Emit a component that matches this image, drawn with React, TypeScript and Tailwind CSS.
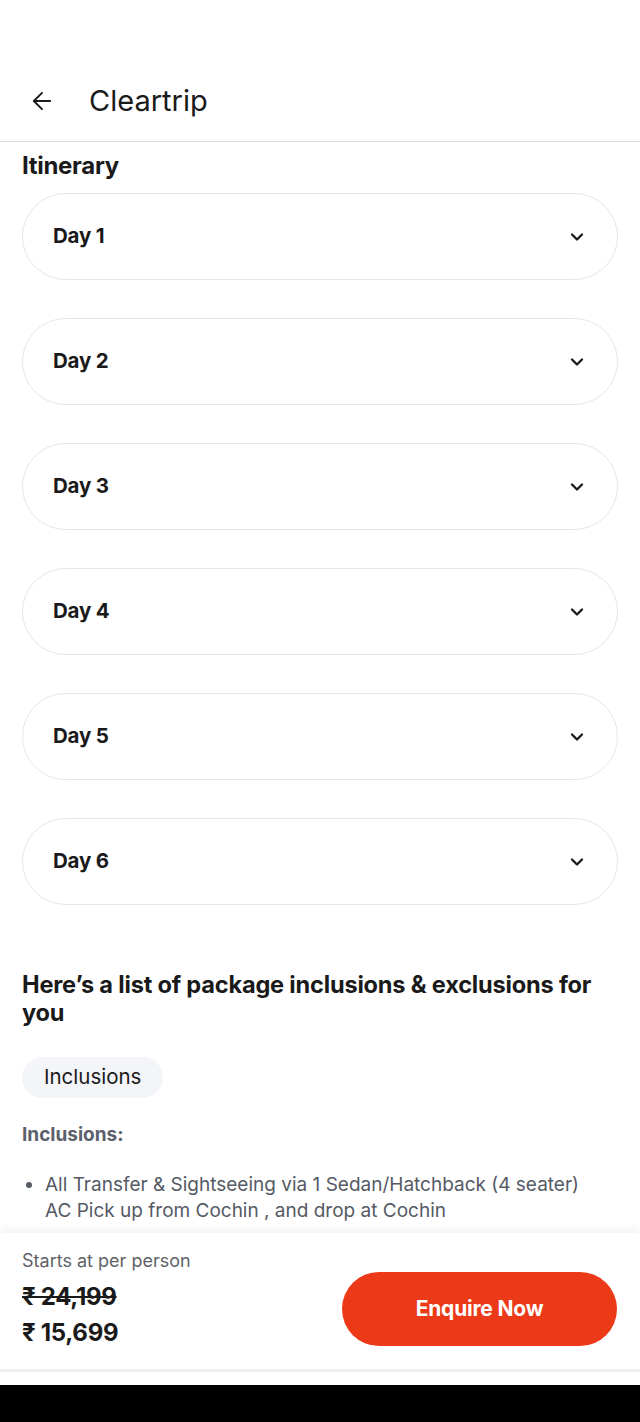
import React from 'react';
import { ArrowLeft, ChevronDown } from 'lucide-react';

const days = ['Day 1', 'Day 2', 'Day 3', 'Day 4', 'Day 5', 'Day 6'];

const App: React.FC = () => {
  return (
    <div
      className="flex h-[1422px] w-[640px] flex-col overflow-hidden bg-white text-[#1a1a1a]"
      style={{ fontFamily: 'Inter, "Noto Sans", sans-serif' }}
    >
      {/* status bar space */}
      <div className="h-[60px] shrink-0" />

      {/* header */}
      <div className="flex h-[82px] shrink-0 items-center border-b border-[#dcdcdc] pl-[28px]">
        <ArrowLeft size={28} strokeWidth={1.6} className="text-[#1a1a1a]" />
        <span className="ml-[33px] text-[29px] font-normal text-[#1a1a1a]">Cleartrip</span>
      </div>

      {/* scrolling content */}
      <div className="flex-1 overflow-hidden px-[22px]">
        <h2 className="mt-[10px] text-[24px] font-bold leading-[28px] tracking-[-0.3px]">Itinerary</h2>

        <div className="mt-[13px] flex flex-col gap-[38px]">
          {days.map((d) => (
            <div
              key={d}
              className="flex h-[87px] items-center justify-between rounded-full border border-[#e6e6e6] pl-[30px] pr-[30px]"
            >
              <span className="text-[20.5px] font-bold tracking-[-0.2px]">{d}</span>
              <ChevronDown size={20} strokeWidth={2.8} />
            </div>
          ))}
        </div>

        <h3 className="mt-[66px] text-[23.6px] font-bold leading-[28px] tracking-[-0.2px]">
          Here’s a list of package inclusions &amp; exclusions for you
        </h3>

        <div className="mt-[30px] inline-flex h-[41px] items-center rounded-full bg-[#f4f5f9] px-[22px] text-[20.5px] text-[#1a1a1a]">
          Inclusions
        </div>

        <p className="mt-[25px] text-[19px] font-bold leading-[24px] text-[#5c606b]">Inclusions:</p>

        <ul className="mt-[25px] list-disc pl-[23px] pr-[30px] text-[19px] leading-[26px] text-[#555a64] marker:text-[#555a64]">
          <li>All Transfer &amp; Sightseeing via 1 Sedan/Hatchback (4 seater) AC Pick up from Cochin , and drop at Cochin</li>
        </ul>
      </div>

      {/* bottom price bar */}
      <div className="relative flex h-[136px] shrink-0 items-start justify-between bg-white px-[22px] shadow-[0_-4px_8px_rgba(0,0,0,0.05)]">
        <div className="flex flex-col pt-[16px]">
          <span className="text-[18px] leading-[24px] text-[#5f6368]">Starts at per person</span>
          <span className="mt-[10px] text-[24px] font-bold leading-[28px] tracking-[-0.3px] text-[#1a1a1a] line-through">₹ 24,199</span>
          <span className="mt-[8px] text-[24px] font-bold leading-[28px] tracking-[-0.3px] text-[#1a1a1a]">₹ 15,699</span>
        </div>
        <button className="mr-[1px] mt-[39px] h-[74px] w-[275px] rounded-full bg-[#ec3a18] text-[21px] font-bold tracking-[-0.2px] text-white">
          Enquire Now
        </button>
      </div>
      <div className="h-[3px] shrink-0 bg-[#efefef]" />
      <div className="h-[13px] shrink-0 bg-white" />
      <div className="h-[37px] shrink-0 bg-black" />
    </div>
  );
};

export default App;
